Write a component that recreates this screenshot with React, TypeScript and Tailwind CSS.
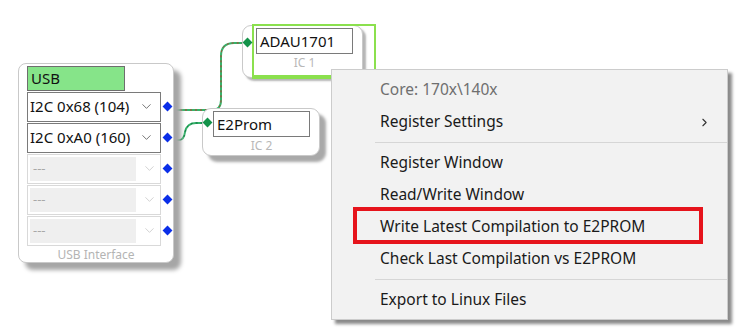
import { ChevronDown, ChevronRight } from "lucide-react";

const FONT = { fontFamily: '"Noto Sans", "Open Sans", sans-serif' };

function Diamond({ color }: { color: string }) {
  return <div className={`w-[7px] h-[7px] rotate-45 ${color}`} />;
}

function Dropdown({ label, enabled }: { label: string; enabled: boolean }) {
  if (!enabled) {
    return (
      <div className="w-[134px] h-[30px] border border-[#d9d9d9] bg-white flex items-center p-[2px]">
        <div className="h-full w-[106px] bg-[#efefef] flex items-center pl-[3px] text-[13px] text-[#a8a8a8] leading-none">
          ---
        </div>
        <ChevronDown className="ml-[6px] w-[15px] h-[15px] text-[#c8c8c8]" strokeWidth={1.3} />
      </div>
    );
  }
  return (
    <div className="w-[134px] h-[30px] border border-[#7a7a7a] bg-white flex items-center pl-[2px] justify-between pr-[6px]">
      <span className="text-[15px] text-[#111] leading-none">{label}</span>
      <ChevronDown className="w-[15px] h-[15px] text-[#555]" strokeWidth={1.3} />
    </div>
  );
}

function UsbNode() {
  const rows = [
    { label: "I2C 0x68 (104)", enabled: true },
    { label: "I2C 0xA0 (160)", enabled: true },
    { label: "---", enabled: false },
    { label: "---", enabled: false },
    { label: "---", enabled: false },
  ];
  return (
    <div className="absolute left-[18px] top-[63px] w-[156px] h-[200px] rounded-[8px] border border-[#c9c9c9] bg-white shadow-[7px_7px_4px_#a6a6a6] flex flex-col pl-[8px] pt-[2px]">
      <div className="w-[98px] h-[29px] bg-[#86e489] border border-[#6e6e6e] flex items-center pl-[3px] text-[15px] text-[#111]">
        USB
      </div>
      <div className="flex flex-col gap-[1px] mt-[1px]">
        {rows.map((r, i) => (
          <div key={i} className="flex items-center">
            <Dropdown label={r.label} enabled={r.enabled} />
            <div className="ml-[3px]">
              <Diamond color="bg-[#0a2ee8]" />
            </div>
          </div>
        ))}
      </div>
      <div className="mt-auto mb-[2px] pr-[8px] text-center text-[12px] text-[#b4b4b4]">USB Interface</div>
    </div>
  );
}

function IcNode({
  className,
  title,
  label,
}: {
  className: string;
  title: string;
  label: string;
}) {
  return (
    <div className={`absolute bg-white rounded-[9px] border border-[#c9c9c9] flex flex-col items-end pr-[9px] ${className}`}>
      <div className="mt-[2px] w-[97px] h-[26px] border border-[#7a7a7a] bg-white flex items-center pl-[3px] text-[15px] text-[#111]">
        {title}
      </div>
      <div className="w-[97px] text-center text-[12px] text-[#b8b8b8] leading-[18px]">{label}</div>
    </div>
  );
}

function Wires() {
  return (
    <svg className="absolute left-0 top-0" width={748} height={332} fill="none">
      <path d="M170 110 L212 110 Q221 110 221 100 L221 56 Q221 43 234 43 L247 43" stroke="#35b36a" strokeWidth={2} />
      <path d="M170 110 L212 110 Q221 110 221 100 L221 56 Q221 43 234 43 L247 43" stroke="#c0392b" strokeWidth={1} strokeDasharray="2 3" />
      <path d="M170 140 L179 140 Q184 140 185 132 Q187 123 196 123 L207 123" stroke="#35b36a" strokeWidth={2} />
      <path d="M170 140 L179 140 Q184 140 185 132 Q187 123 196 123 L207 123" stroke="#0b6b3a" strokeWidth={1} strokeDasharray="2 3" />
    </svg>
  );
}

function MenuItem({ children, muted, arrow }: { children: string; muted?: boolean; arrow?: boolean }) {
  return (
    <div className={`h-[32px] flex items-center pl-[48px] pr-[16px] text-[15.5px] ${muted ? "text-[#6f6f6f]" : "text-[#1a1a1a]"}`}>
      <span className="flex-1">{children}</span>
      {arrow && <ChevronRight className="w-[13px] h-[13px] text-[#333]" strokeWidth={2} />}
    </div>
  );
}

function Separator() {
  return (
    <div className="h-[9px] flex items-center pl-[43px]">
      <div className="h-px flex-1 bg-[#d6d6d6]" />
    </div>
  );
}

function ContextMenu() {
  return (
    <div className="absolute left-[331px] top-[69px] w-[397px] h-[251px] bg-[#f2f2f2] border border-[#cccccc] shadow-[4px_4px_3px_#8a8a8a] pt-[4px]">
      <MenuItem muted>Core: 170x\140x</MenuItem>
      <MenuItem arrow>Register Settings</MenuItem>
      <Separator />
      <MenuItem>Register Window</MenuItem>
      <MenuItem>Read/Write Window</MenuItem>
      <MenuItem>Write Latest Compilation to E2PROM</MenuItem>
      <MenuItem>Check Last Compilation vs E2PROM</MenuItem>
      <Separator />
      <MenuItem>Export to Linux Files</MenuItem>
      <div className="absolute left-[21px] top-[137px] w-[350px] h-[37px] border-[4px] border-[#e6141c]" />
    </div>
  );
}

export default function App() {
  return (
    <div className="relative w-[748px] h-[332px] bg-white overflow-hidden" style={FONT}>
      <Wires />
      <UsbNode />
      <IcNode className="left-[242px] top-[25px] w-[121px] h-[53px] shadow-[3px_3px_2px_#b5b5b5]" title="ADAU1701" label="IC 1" />
      <div className="absolute left-[252px] top-[24px] w-[124px] h-[55px] border-[2px] border-b-[4px] border-[#8be04e]" />
      <IcNode className="left-[202px] top-[108px] w-[118px] h-[48px] shadow-[6px_6px_3px_#a9a9a9]" title="E2Prom" label="IC 2" />
      <div className="absolute left-[244px] top-[39px]">
        <Diamond color="bg-[#14934a]" />
      </div>
      <div className="absolute left-[204px] top-[119px]">
        <Diamond color="bg-[#14934a]" />
      </div>
      <ContextMenu />
    </div>
  );
}
